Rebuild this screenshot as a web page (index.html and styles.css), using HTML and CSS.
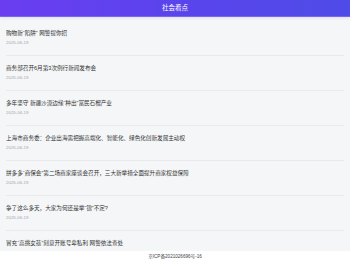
FILE: index.html
```html
<!DOCTYPE html>
<html lang="zh-CN">
<head>
    <meta charset="UTF-8" />
    <meta name="viewport" content="width=device-width, initial-scale=1" />
    <title>社会看点</title>
    <link rel="stylesheet" href="styles.css">
</head>
<body>
    <header class="top-bar">社会看点</header>
    <ul class="news-list">
        <li class="news-item">
            <div class="news-title">购物新“陷阱” 网警提你招</div>
            <div class="news-date">2025-06-19</div>
        </li>
        <li class="news-item">
            <div class="news-title">商务部召开6月第3次例行新闻发布会</div>
            <div class="news-date">2025-06-19</div>
        </li>
        <li class="news-item">
            <div class="news-title">多年坚守 新疆沙漠边缘“种出”富民石榴产业</div>
            <div class="news-date">2025-06-19</div>
        </li>
        <li class="news-item">
            <div class="news-title">上海市商务委：企业出海需把握高端化、智能化、绿色化创新发展主动权</div>
            <div class="news-date">2025-06-19</div>
        </li>
        <li class="news-item">
            <div class="news-title">拼多多“商保会”第二场商家座谈会召开，三大新举措全面提升商家权益保障</div>
            <div class="news-date">2025-06-19</div>
        </li>
        <li class="news-item">
            <div class="news-title">争了这么多天，大家为何还是举“锦”不定?</div>
            <div class="news-date">2025-06-19</div>
        </li>
        <li class="news-item">
            <div class="news-title">冒充“高挑女孩”刻意开账号卑私利 网警依法查处</div>
            <div class="news-date">2025-06-19</div>
        </li>
    </ul>
    <footer class="icp">京ICP备2021026696号-16</footer>
</body>
</html>
```

FILE: styles.css
```css
html, body {
    margin: 0;
    padding: 0;
    height: 100%;
    overflow: hidden;
    font-family: "Liberation Sans", "Noto Sans CJK SC", sans-serif;
    background: #f5f6f8;
}
.top-bar {
    height: 16px;
    line-height: 16px;
    text-align: center;
    font-size: 6.5px;
    color: #ffffff;
    background: linear-gradient(90deg, #6a3df1 0%, #5a44ec 50%, #4f4be8 100%);
    border-bottom: 1px solid #7a63f5;
    box-shadow: 0 1px 3px rgba(60, 60, 90, 0.12);
}
.news-list {
    list-style: none;
    margin: 0;
    padding: 4px 6px 0;
}
.news-item {
    padding: 8px 0 9px;
    border-bottom: 1px solid #e9eaee;
}
.news-title {
    font-size: 5.6px;
    line-height: 8px;
    color: #333333;
    white-space: nowrap;
    overflow: hidden;
    margin-bottom: 3px;
}
.news-date {
    font-size: 4.4px;
    line-height: 6px;
    color: #a3a6ad;
}
.icp {
    position: fixed;
    left: 0;
    right: 0;
    bottom: 0;
    height: 12px;
    line-height: 12px;
    text-align: center;
    font-size: 4.6px;
    color: #444444;
    background: #ffffff;
}
```
